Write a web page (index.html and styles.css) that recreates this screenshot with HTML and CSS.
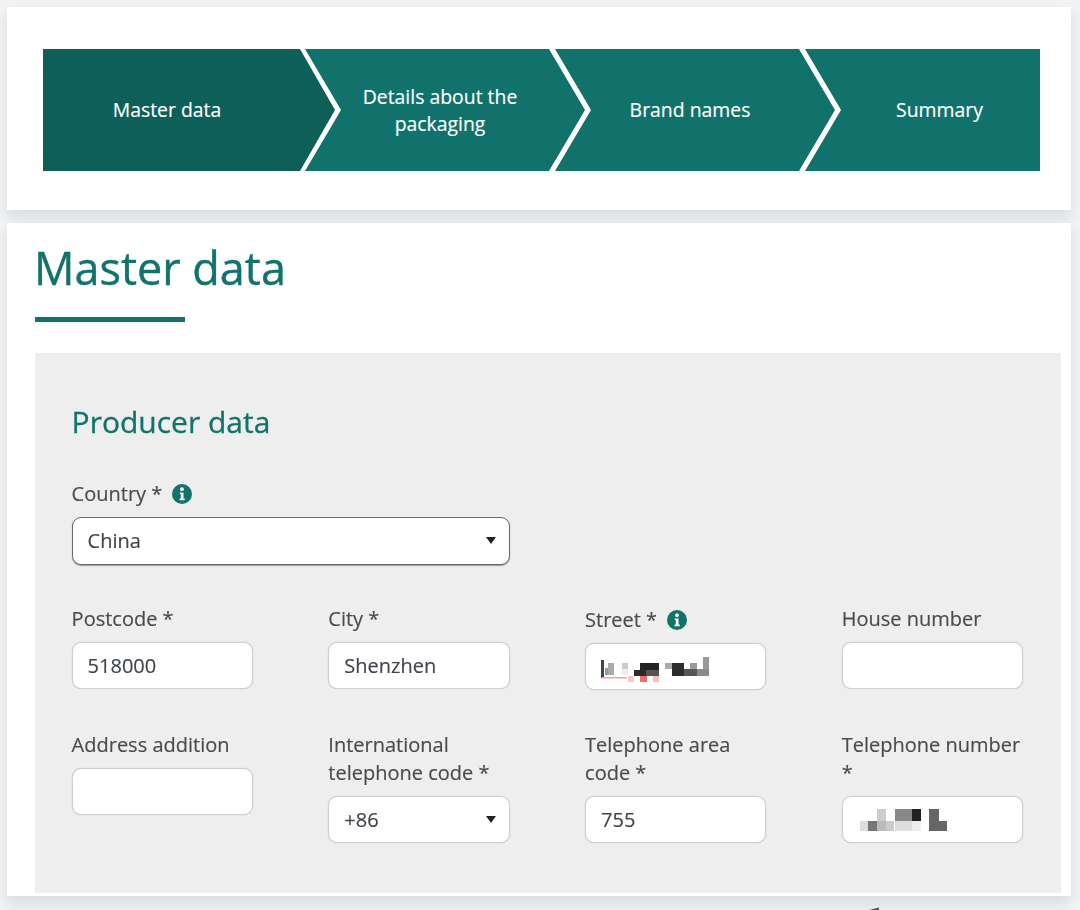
FILE: index.html
```html
<!DOCTYPE html>
<html lang="en">
<head>
<meta charset="utf-8">
<title>Master data</title>
<link rel="stylesheet" href="styles.css">
</head>
<body>
<div class="page">
  <section class="card stepper-card">
    <nav class="stepper">
      <div class="step step-first single">Master data</div>
      <div class="step step-mid">Details about the packaging</div>
      <div class="step step-mid single">Brand names</div>
      <div class="step step-last single">Summary</div>
    </nav>
  </section>
  <main class="card form-card">
    <h1 class="title">Master data</h1>
    <div class="rule"></div>
    <section class="panel">
      <h2 class="panel-title">Producer data</h2>
      <div class="country">
        <div class="label">Country *
          <svg class="info" viewBox="0 0 20 20"><circle cx="10" cy="10" r="10" fill="#11736b"/><circle cx="10" cy="5.2" r="1.9" fill="#fff"/><path d="M7.8 8.4h3.7v6.2h1.2v1.7H7.6v-1.7h1.2V10.1h-1z" fill="#fff"/></svg>
        </div>
        <div class="field field-focus"><span>China</span><i class="caret"></i></div>
      </div>
      <div class="grid">
        <div><div class="label">Postcode *</div><div class="field"><span>518000</span></div></div>
        <div><div class="label">City *</div><div class="field"><span>Shenzhen</span></div></div>
        <div>
          <div class="label label-icon">Street *
            <svg class="info" viewBox="0 0 20 20"><circle cx="10" cy="10" r="10" fill="#11736b"/><circle cx="10" cy="5.2" r="1.9" fill="#fff"/><path d="M7.8 8.4h3.7v6.2h1.2v1.7H7.6v-1.7h1.2V10.1h-1z" fill="#fff"/></svg>
          </div>
          <div class="field">
            <svg class="mosaic street" viewBox="601 650 110 33">
              <rect x="601" y="660" width="3" height="18" fill="#444"/>
              <rect x="605" y="668" width="3" height="7" fill="#999"/>
              <rect x="608" y="663" width="6" height="12" fill="#aaa"/>
              <rect x="622" y="663" width="6" height="6" fill="#ccc"/>
              <rect x="622" y="669" width="6" height="6" fill="#eee"/>
              <rect x="640" y="663" width="19" height="7" fill="#222"/>
              <rect x="634" y="670" width="25" height="6" fill="#2a2a2a"/>
              <rect x="646" y="670" width="13" height="6" fill="#555"/>
              <rect x="602" y="677" width="25" height="1.5" fill="#f5a0a0"/>
              <rect x="628" y="676" width="6" height="6" fill="#fbc8c8"/>
              <rect x="640" y="676" width="7" height="6" fill="#f46a6a"/>
              <rect x="653" y="676" width="6" height="6" fill="#fbbcbc"/>
              <rect x="665" y="663" width="7" height="6" fill="#aaa"/>
              <rect x="672" y="663" width="12" height="13" fill="#2c2c2c"/>
              <rect x="684" y="669" width="13" height="7" fill="#555"/>
              <rect x="690" y="663" width="7" height="6" fill="#999"/>
              <rect x="697" y="669" width="12" height="7" fill="#8a8a8a"/>
              <rect x="703" y="657" width="6" height="12" fill="#999"/>
            </svg>
          </div>
        </div>
        <div><div class="label">House number</div><div class="field"></div></div>
        <div><div class="label">Address addition</div><div class="field"></div></div>
        <div><div class="label">International telephone code *</div><div class="field"><span>+86</span><i class="caret"></i></div></div>
        <div><div class="label">Telephone area code *</div><div class="field"><span>755</span></div></div>
        <div>
          <div class="label">Telephone number *</div>
          <div class="field">
            <svg class="mosaic phone" viewBox="858 805 100 29">
              <rect x="860" y="821" width="8" height="10" fill="#ddd"/>
              <rect x="868" y="821" width="9" height="10" fill="#777"/>
              <rect x="877" y="809" width="9" height="12" fill="#ccc"/>
              <rect x="877" y="821" width="9" height="10" fill="#bbb"/>
              <rect x="886" y="821" width="8" height="10" fill="#ccc"/>
              <rect x="895" y="809" width="17" height="12" fill="#888"/>
              <rect x="912" y="809" width="9" height="12" fill="#222"/>
              <rect x="895" y="821" width="17" height="10" fill="#ddd"/>
              <rect x="912" y="821" width="9" height="10" fill="#eee"/>
              <rect x="929" y="809" width="10" height="22" fill="#666"/>
              <rect x="939" y="821" width="8" height="10" fill="#666"/>
            </svg>
          </div>
        </div>
      </div>
    </section>
  </main>
  <svg class="peek" viewBox="0 0 14 4"><path d="M1 3.5 13 .5V4H1z" fill="#555"/></svg>
</div>
</body>
</html>
```
FILE: styles.css
```css
* { box-sizing: border-box; }
html, body { margin: 0; height: 910px; overflow: hidden; }
body { background: #f2f3f5; font-family: "Open Sans", "Noto Sans", sans-serif; color: #4a4a4a; -webkit-text-stroke: 0.15px; }
.page { padding: 7px 9px 0 7px; filter: blur(0.5px); }
.card { background: #fff; box-shadow: 0 7px 14px rgba(60, 70, 70, .14); }
.stepper-card { height: 203px; padding: 42px 31px 0 36px; }
.stepper { display: flex; height: 122px; }
.step {
  height: 122px; display: flex; align-items: center; justify-content: center;
  text-align: center; color: #fff; background: #11726b;
  font-size: 19.4px; line-height: 27px; margin-left: -30px; flex: none;
}
.step-first { margin-left: 0; width: 292px; padding-right: 44px; background: #0f5f59;
  clip-path: polygon(0 0, 257px 0, 100% 50%, 257px 100%, 0 100%); }
.step-mid { width: 280px; padding: 0 46px 0 36px;
  clip-path: polygon(0 0, 244px 0, 100% 50%, 244px 100%, 0 100%, 36px 50%); }
.step-last { width: 235px; padding: 0 2px 0 36px;
  clip-path: polygon(0 0, 100% 0, 100% 100%, 0 100%, 36px 50%); }
.single { padding-bottom: 2px; }
.form-card { margin-top: 13px; height: 673px; padding: 0 10px 3px 28px; }
.title { margin: 0 0 0 -1px; font-size: 45px; font-weight: 400; line-height: 64px; height: 94px; padding-top: 13px; color: #11736b; -webkit-text-stroke: 0.4px; }
.rule { width: 150px; height: 5px; background: #11736b; }
.panel { margin-top: 31px; height: 540px; background: #eee; padding: 49px 38px 0 36.6px; }
.panel-title { margin: 0 0 38px; font-size: 30px; font-weight: 400; line-height: 40px; color: #11736b; -webkit-text-stroke: 0.3px; }
.country { width: 438px; margin-bottom: 40px; }
.label { font-size: 20px; line-height: 28px; margin-bottom: 9px; }
.label-icon { padding-top: 1px; }
.info { width: 20px; height: 20px; vertical-align: -3px; margin-left: 5px; }
.grid { display: grid; grid-template-columns: repeat(4, 1fr); column-gap: 75.5px; row-gap: 41px; align-items: start; }
.field {
  height: 47px; background: #fff; border: 1px solid #cfcfcf; border-radius: 9px;
  box-shadow: 0 0 1px #bbb;
  display: flex; align-items: center; justify-content: space-between;
  padding: 0 15px; font-size: 20px; color: #3f444a;
}
.field-focus { height: 48px; border-color: #66686b; box-shadow: 0 1px 1px #999; padding-bottom: 2px; }
.caret { width: 0; height: 0; border-left: 5px solid transparent; border-right: 5px solid transparent; border-top: 7px solid #222; margin-right: -2px; }
.mosaic { display: block; height: 33px; width: 110px; }
.phone { height: 29px; width: 100px; }
.peek { display: block; width: 14px; height: 4px; margin: 11px 0 0 859px; }
```
